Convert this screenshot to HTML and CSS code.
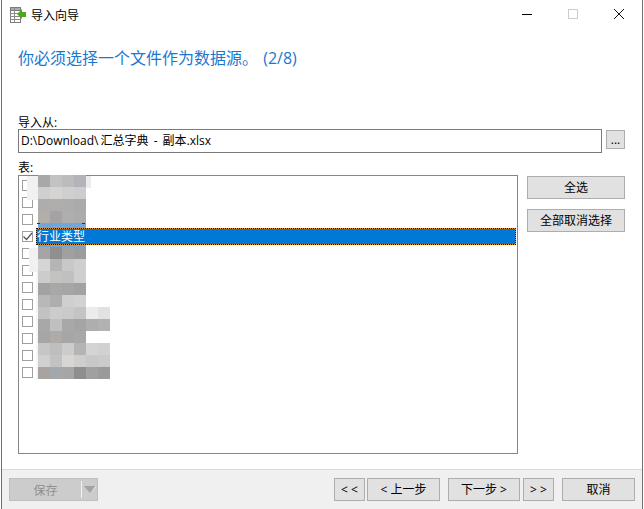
FILE: index.html
```html
<!DOCTYPE html>
<html lang="zh-CN">
<head>
<meta charset="utf-8">
<title>导入向导</title>
<link rel="stylesheet" href="styles.css">
</head>
<body>
<div class="window">
  <header class="titlebar">
    <svg class="app-icon" width="17" height="18" viewBox="0 0 17 18">
      <rect x="0.5" y="1.5" width="10" height="15" fill="#fff" stroke="#7d7d7d"/>
      <rect x="0.5" y="1.5" width="10" height="3" fill="#a9a9a9" stroke="#7d7d7d"/>
      <path d="M0 7.5h11M0 10.5h11M0 13.5h11M4.5 2v14" stroke="#8a8a8a" stroke-width="1" fill="none"/>
      <path d="M7 8 L12 3 V6 H16 V11 H12 V13 Z" fill="#4fa81c"/>
    </svg>
    <span class="title">导入向导</span>
    <div class="controls">
      <svg class="ctl" width="46" height="30" viewBox="0 0 46 30"><path d="M18 14.5h10" stroke="#000" fill="none"/></svg>
      <svg class="ctl" width="46" height="30" viewBox="0 0 46 30"><rect x="18.5" y="9.5" width="9" height="9" stroke="#cccccc" fill="none"/></svg>
      <svg class="ctl" width="46" height="30" viewBox="0 0 46 30"><path d="M18 9l10 10M28 9l-10 10" stroke="#111" fill="none"/></svg>
    </div>
  </header>

  <main class="content">
    <h1 class="heading">你必须选择一个文件作为数据源。 (2/8)</h1>
    <label class="label from-label">导入从:</label>
    <div class="path-row">
      <div class="path-input">D:\Download\<span class="path-cjk">汇总字典 - 副本.xlsx</span></div>
      <button class="btn browse">...</button>
    </div>
    <label class="label table-label">表:</label>
    <div class="table-row">
      <div class="listbox">
        <div class="item"><span class="check"></span></div>
        <div class="item"><span class="check"></span></div>
        <div class="item"><span class="check"></span></div>
        <div class="item">
          <span class="check"><svg width="11" height="11" viewBox="0 0 11 11"><path d="M1.5 5.5 L4.5 8.5 L10 2" stroke="#555" stroke-width="1.2" fill="none"/></svg></span>
          <span class="item-text selected">行业类型</span>
        </div>
        <div class="item"><span class="check"></span></div>
        <div class="item"><span class="check"></span></div>
        <div class="item"><span class="check"></span></div>
        <div class="item"><span class="check"></span></div>
        <div class="item"><span class="check"></span></div>
        <div class="item"><span class="check"></span></div>
        <div class="item"><span class="check"></span></div>
        <div class="item"><span class="check"></span></div>
        <svg class="mosaic" width="100" height="210" viewBox="26 174 100 210" shape-rendering="crispEdges">
          <rect x="27" y="176" width="11" height="24" fill="#f1f1f1"/>
          <rect x="86" y="176" width="5" height="12" fill="#ececec"/>
          <rect x="29" y="248" width="9" height="24" fill="#f1f1f1"/>
          <rect x="36" y="272" width="2" height="108" fill="#f6f6f6"/>
          <rect x="38" y="223" width="48" height="5" fill="#6fa6dc"/>
          <rect x="38" y="245" width="48" height="2" fill="#6fa6dc"/>
          <rect x="37" y="223" width="3" height="1" fill="#333"/>
          <rect x="82" y="223" width="3" height="1" fill="#333"/>
          <rect x="38" y="175" width="12" height="12" fill="#a8a8a8"/><rect x="50" y="175" width="12" height="12" fill="#c2c2c2"/><rect x="62" y="175" width="12" height="12" fill="#bcbcbc"/><rect x="74" y="175" width="12" height="12" fill="#b4b4b8"/>
          <rect x="38" y="187" width="12" height="12" fill="#cfcfcf"/><rect x="50" y="187" width="12" height="12" fill="#d6d4d2"/><rect x="62" y="187" width="12" height="12" fill="#cfcfcf"/><rect x="74" y="187" width="12" height="12" fill="#cdcdcd"/>
          <rect x="38" y="199" width="12" height="12" fill="#adadad"/><rect x="50" y="199" width="12" height="12" fill="#b0aeac"/><rect x="62" y="199" width="12" height="12" fill="#adadad"/><rect x="74" y="199" width="12" height="12" fill="#aaaaaa"/>
          <rect x="38" y="211" width="12" height="12" fill="#b2aea8"/><rect x="50" y="211" width="12" height="12" fill="#a5a3a5"/><rect x="62" y="211" width="12" height="12" fill="#aeaeae"/><rect x="74" y="211" width="12" height="12" fill="#acacac"/>
          <rect x="38" y="247" width="12" height="12" fill="#a5a5a5"/><rect x="50" y="247" width="12" height="12" fill="#8f8f8f"/><rect x="62" y="247" width="12" height="12" fill="#a0a0a0"/><rect x="74" y="247" width="12" height="12" fill="#9c9c9c"/>
          <rect x="38" y="259" width="12" height="12" fill="#d7d5d3"/><rect x="50" y="259" width="12" height="12" fill="#b5b5b5"/><rect x="62" y="259" width="12" height="12" fill="#c8c8c8"/><rect x="74" y="259" width="12" height="12" fill="#cfcfd1"/>
          <rect x="38" y="271" width="12" height="12" fill="#cbcdcd"/><rect x="50" y="271" width="12" height="12" fill="#c4c2c0"/><rect x="62" y="271" width="12" height="12" fill="#c0c0c0"/><rect x="74" y="271" width="12" height="12" fill="#cfcfd1"/>
          <rect x="38" y="283" width="12" height="12" fill="#a2a2a2"/><rect x="50" y="283" width="12" height="12" fill="#a8a8a8"/><rect x="62" y="283" width="12" height="12" fill="#a6a6a6"/><rect x="74" y="283" width="12" height="12" fill="#a2a2a2"/>
          <rect x="38" y="295" width="12" height="12" fill="#b8b8b8"/><rect x="50" y="295" width="12" height="12" fill="#aeaeae"/><rect x="62" y="295" width="12" height="12" fill="#cfcfcf"/><rect x="74" y="295" width="12" height="12" fill="#d2d2d2"/>
          <rect x="38" y="307" width="12" height="12" fill="#c2c2c2"/><rect x="50" y="307" width="12" height="12" fill="#cccccc"/><rect x="62" y="307" width="12" height="12" fill="#cacaca"/><rect x="74" y="307" width="12" height="12" fill="#c4c4c4"/><rect x="86" y="307" width="12" height="12" fill="#ececec"/><rect x="98" y="307" width="12" height="12" fill="#e2e2e2"/>
          <rect x="38" y="319" width="12" height="12" fill="#a8a8a8"/><rect x="50" y="319" width="12" height="12" fill="#c0c0c0"/><rect x="62" y="319" width="12" height="12" fill="#a8a8a8"/><rect x="74" y="319" width="12" height="12" fill="#a6a4a2"/><rect x="86" y="319" width="12" height="12" fill="#aeaeae"/><rect x="98" y="319" width="12" height="12" fill="#b2b2b2"/>
          <rect x="38" y="331" width="12" height="12" fill="#a5a7a5"/><rect x="50" y="331" width="12" height="12" fill="#aeaba9"/><rect x="62" y="331" width="12" height="12" fill="#a6a6a6"/><rect x="74" y="331" width="12" height="12" fill="#a8a8a8"/>
          <rect x="38" y="343" width="12" height="12" fill="#c6c6c6"/><rect x="50" y="343" width="12" height="12" fill="#bebebe"/><rect x="62" y="343" width="12" height="12" fill="#cccccc"/><rect x="74" y="343" width="12" height="12" fill="#b4b4b4"/><rect x="86" y="343" width="12" height="12" fill="#d4d4d4"/><rect x="98" y="343" width="12" height="12" fill="#d0d2d2"/>
          <rect x="38" y="355" width="12" height="12" fill="#d0d0d0"/><rect x="50" y="355" width="12" height="12" fill="#c2c2c2"/><rect x="62" y="355" width="12" height="12" fill="#d8d6d4"/><rect x="74" y="355" width="12" height="12" fill="#d0cecc"/><rect x="86" y="355" width="12" height="12" fill="#c8c8c8"/><rect x="98" y="355" width="12" height="12" fill="#cbcbcb"/>
          <rect x="38" y="367" width="12" height="12" fill="#a8a2a0"/><rect x="50" y="367" width="12" height="12" fill="#a2a8ac"/><rect x="62" y="367" width="12" height="12" fill="#a6a6a6"/><rect x="74" y="367" width="12" height="12" fill="#8e8e8e"/><rect x="86" y="367" width="12" height="12" fill="#a0a0a0"/><rect x="98" y="367" width="12" height="12" fill="#9a9a9a"/>
        </svg>
      </div>
      <div class="side-buttons">
        <button class="btn side">全选</button>
        <button class="btn side">全部取消选择</button>
      </div>
    </div>
  </main>

  <footer class="footer">
    <div class="save">
      <span class="save-text">保存</span>
      <span class="save-div"></span>
      <svg class="save-arrow" width="14" height="10" viewBox="0 0 14 10"><path d="M1 1h12l-6 7z" fill="#a3a3a3"/><path d="M7 8l6-6v-1z" fill="#fff"/></svg>
    </div>
    <div class="nav">
      <button class="btn step small">&lt; &lt;</button>
      <button class="btn step prev">&lt; 上一步</button>
      <button class="btn step next">下一步 &gt;</button>
      <button class="btn step small">&gt; &gt;</button>
      <button class="btn step cancel">取消</button>
    </div>
  </footer>
</div>
</body>
</html>
```

FILE: styles.css
```css
* { box-sizing: border-box; }
html, body { margin: 0; padding: 0; background: #fff; }
body {
  width: 644px;
  height: 509px;
  overflow: hidden;
  font-family: "Open Sans", "Noto Sans CJK SC", sans-serif;
  font-size: 12px;
  color: #000;
}
.window {
  width: 642px;
  height: 509px;
  margin-left: 1px;
  border-left: 1px solid #6f6f6f;
  border-right: 1px solid #6f6f6f;
  display: flex;
  flex-direction: column;
  background: #fff;
}
.titlebar {
  height: 30px;
  flex: none;
  display: flex;
  align-items: center;
  padding-left: 8px;
}
.app-icon { flex: none; margin-top: -1px; }
.title { margin-left: 4px; line-height: 16px; margin-top: 1px; }
.controls { margin-left: auto; display: flex; }
.ctl { display: block; }
.content {
  flex: 1;
  padding: 16px 16px 0 16px;
  position: relative;
}
.heading {
  margin: 0;
  font-size: 16px;
  font-weight: 400;
  line-height: 24px;
  color: #1a78cf;
  word-spacing: 1px;
}
.label { display: block; height: 14px; line-height: 16px; }
.from-label { margin-top: 45px; }
.table-label { margin-top: 7px; height: 15px; line-height: 15px; }
.path-row {
  display: flex;
  align-items: flex-start;
}
.path-input {
  width: 584px;
  height: 24px;
  border: 1px solid #7a7a7a;
  line-height: 22px;
  padding-left: 2px;
}
.path-cjk { margin-left: 2px; word-spacing: 2px; }
.btn {
  font-family: inherit;
  font-size: 12px;
  color: #000;
  background: #e1e1e1;
  border: 1px solid #adadad;
  padding: 0;
  margin: 0;
  line-height: 16px;
}
.browse {
  width: 19px;
  height: 19px;
  margin: 1px 0 0 4px;
}
.table-row {
  display: flex;
  align-items: flex-start;
}
.listbox {
  width: 500px;
  height: 279px;
  border: 1px solid #82878a;
  padding-top: 1px;
  position: relative;
}
.item {
  height: 17px;
  display: flex;
  align-items: center;
  padding-left: 3px;
}
.check {
  width: 11px;
  height: 11px;
  flex: none;
  border: 1px solid #a0a0a0;
  background: #fff;
  display: block;
  position: relative;
}
.check svg { display: block; margin: -1px; }
.item-text {
  flex: 1;
  height: 17px;
  line-height: 15px;
  margin: 0 1px 0 3px;
}
.selected {
  background: #0078d7;
  color: #fff;
  border: 1px solid #e08a20;
  outline: 1px dotted #111;
  outline-offset: -1px;
}
.mosaic {
  position: absolute;
  left: 7px;
  top: -2px;
  pointer-events: none;
}
.side-buttons {
  display: flex;
  flex-direction: column;
  gap: 10px;
  margin: 1px 0 0 9px;
}
.side { width: 98px; height: 23px; }
.footer {
  height: 40px;
  flex: none;
  background: #f0f0f0;
  border-top: 1px solid #d9d9d9;
  display: flex;
  align-items: flex-start;
  padding: 8px 7px 0 7px;
}
.save {
  width: 89px;
  height: 23px;
  background: #cccccc;
  border: 1px solid #bfbfbf;
  display: flex;
  align-items: center;
  color: #909090;
}
.save-text { width: 72px; text-align: center; }
.save-div { width: 1px; height: 17px; background: #f2f2f2; }
.save-arrow { margin-left: 1px; }
.nav {
  margin-left: auto;
  display: flex;
  align-items: flex-start;
}
.step { height: 23px; }
.small { width: 31px; }
.prev { width: 73px; margin-left: 2px; }
.next { width: 72px; margin-left: 8px; }
.next + .small { margin-left: 3px; }
.cancel { width: 73px; margin-left: 8px; }
```
